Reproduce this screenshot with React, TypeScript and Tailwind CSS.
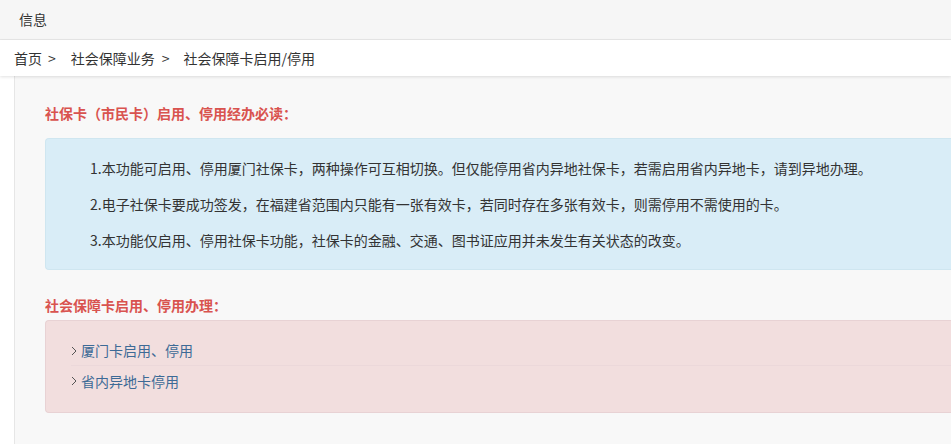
const notes = [
  "1.本功能可启用、停用厦门社保卡，两种操作可互相切换。但仅能停用省内异地社保卡，若需启用省内异地卡，请到异地办理。",
  "2.电子社保卡要成功签发，在福建省范围内只能有一张有效卡，若同时存在多张有效卡，则需停用不需使用的卡。",
  "3.本功能仅启用、停用社保卡功能，社保卡的金融、交通、图书证应用并未发生有关状态的改变。",
];

const links = ["厦门卡启用、停用", "省内异地卡停用"];

export default function App() {
  return (
    <div className="h-[444px] w-[951px] overflow-hidden bg-white text-[14px] text-[#333] [font-family:'Microsoft_YaHei','Noto_Sans_CJK_SC',sans-serif]">
      {/* Title bar */}
      <div className="flex h-10 items-center border-b border-[#e8e8e8] bg-[#f6f6f6] pl-[19px]">信息</div>

      {/* Breadcrumb */}
      <div className="relative z-10 flex h-9 items-center pl-[14px] shadow-[0_1px_3px_rgba(0,0,0,0.12)]">
        <span>首页</span>
        <span className="ml-[6px]">&gt;</span>
        <span className="ml-[15px]">社会保障业务</span>
        <span className="ml-[7px]">&gt;</span>
        <span className="ml-[14px]">社会保障卡启用/停用</span>
      </div>

      {/* Content */}
      <div className="ml-[14px] h-full border-l border-[#e6e6e6] bg-[#f8f8f8] pl-[30px] pt-[27px]">
        <h3 className="leading-5 font-bold text-[#d9534f]">社保卡（市民卡）启用、停用经办必读：</h3>

        <div className="mt-[15px] rounded-l-[4px] border border-r-0 border-[#cfe6f0] bg-[#d9edf7] pb-[11px] pl-[44px] pt-[11px]">
          {notes.map((n) => (
            <p key={n} className="leading-[36px]">
              {n}
            </p>
          ))}
        </div>

        <h3 className="mt-[25px] leading-5 font-bold text-[#d9534f]">社会保障卡启用、停用办理：</h3>

        <div className="mt-[5px] rounded-l-[4px] border border-r-0 border-[#e8d2d4] bg-[#f2dede] pb-[16px] pl-[25px] pt-[15px]">
          {links.map((l, i) => (
            <div key={l} className={`flex h-[30px] items-center text-[#3d6a96] ${i === 0 ? "border-b border-[#ecd8da]" : ""}`}>
              <svg width="6" height="10" viewBox="0 0 6 10" className="text-[#555]">
                <path d="M1 1l4 4-4 4" fill="none" stroke="currentColor" strokeWidth="1" />
              </svg>
              <span className="ml-[4px]">{l}</span>
            </div>
          ))}
        </div>
      </div>
    </div>
  );
}
